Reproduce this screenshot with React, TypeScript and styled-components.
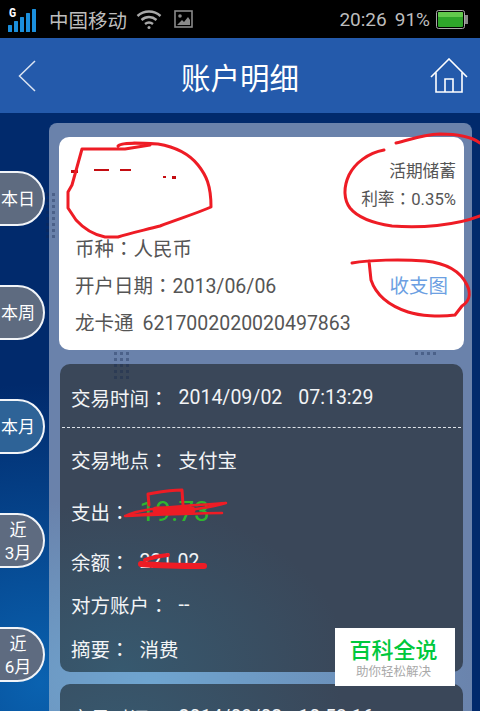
import React from 'react';
import styled, { createGlobalStyle } from 'styled-components';

const Global = createGlobalStyle`
  html, body {
    margin: 0;
    padding: 0;
    background: #000;
  }
  body {
    font-family: Roboto, "Noto Sans CJK SC", sans-serif;
  }
`;

const Screen = styled.div`
  position: relative;
  width: 480px;
  height: 711px;
  overflow: hidden;
`;

// Status bar
const StatusBar = styled.div`
  height: 38px;
  background: #000;
  color: #bdbdbd;
  display: flex;
  align-items: center;
  padding: 0 11px 0 8px;
  box-sizing: border-box;
`;
const Carrier = styled.span`
  font-size: 19.5px;
  margin: 0 9px 0 12px;
  white-space: nowrap;
`;
const StatusRight = styled.div`
  margin-left: auto;
  display: flex;
  align-items: center;
  font-size: 19px;
`;
const Clock = styled.span`
  margin-right: 8px;
`;
const Percent = styled.span`
  margin-right: 6px;
`;

// Header
const Header = styled.div`
  height: 75px;
  background: #245aab;
  display: grid;
  grid-template-columns: 1fr auto 1fr;
  align-items: center;
  padding: 0 12px 0 18px;
`;
const Title = styled.h1`
  margin: 0 6px 0 0;
  color: #fff;
  font-size: 29.5px;
  font-weight: 400;
`;
const HomeSlot = styled.div`
  justify-self: end;
  display: flex;
`;

// Body
const Body = styled.div`
  height: 598px;
  display: flex;
  background:
    radial-gradient(ellipse 300px 300px at 40px 570px, #0a62b0 0%, rgba(10, 98, 176, 0) 100%),
    #012a6c;
`;
const SideNav = styled.div`
  width: 49px;
  flex-shrink: 0;
  display: flex;
  flex-direction: column;
  gap: 59px;
  padding-top: 58px;
`;
const Tab = styled.div<{ $active?: boolean }>`
  width: 48px;
  height: 55px;
  margin-left: -3px;
  box-sizing: border-box;
  border: 2px solid #f1f4f8;
  border-radius: 0 28px 28px 0;
  background: ${(p) => (p.$active ? '#2e6397' : '#5e6b80')};
  color: #fff;
  font-size: 17px;
  line-height: 23px;
  display: flex;
  align-items: center;
  justify-content: center;
  text-align: center;
  padding-right: 6px;
  padding-top: 2px;
`;
const Panel = styled.div`
  width: 423px;
  margin-top: 10px;
  height: 600px;
  box-sizing: border-box;
  border-radius: 8px 8px 0 0;
  padding: 14px 8px 0 10px;
  background:
    radial-gradient(ellipse 340px 190px at 100px 560px, #6fa5d0 0%, rgba(111, 165, 208, 0) 100%),
    #6a82ab;
`;

// Full-width colon, centred in its cell as in the original font
const Colon = styled.span`
  font-family: "Noto Sans CJK TC", sans-serif;
`;

// White account card
const AccountCard = styled.div`
  height: 213px;
  box-sizing: border-box;
  background: #fff;
  border-radius: 10px;
  padding: 0 16px;
  color: #555;
  font-size: 19.5px;
`;
const AccountTop = styled.div`
  height: 92px;
  margin-right: -8px;
  padding-top: 21px;
  box-sizing: border-box;
  text-align: right;
  font-size: 16.7px;
  line-height: 27px;
`;
const AccountRow = styled.div`
  height: 37px;
  display: flex;
  align-items: center;
  justify-content: space-between;
  white-space: nowrap;
`;
const ChartLink = styled.span`
  color: #6c9fe2;
`;
const CardNumber = styled.span`
  margin-left: 9px;
`;

// Dark transaction card
const TxCard = styled.div`
  margin: 14px 1px 0;
  box-sizing: border-box;
  padding: 21px 0 12px;
  border-radius: 10px;
  color: #f2f4f6;
  font-size: 19.5px;
  background:
    radial-gradient(ellipse 230px 170px at 60px 100%, #37596f 0%, rgba(55, 89, 111, 0) 100%),
    #3a4759;
`;
const NextTxCard = styled(TxCard)`
  margin-top: 12px;
`;
const TxRow = styled.div<{ $gap?: number }>`
  display: flex;
  align-items: center;
  height: 24px;
  padding-left: 11px;
  margin-top: ${(p) => p.$gap ?? 0}px;
  white-space: pre;
`;
const TxLabel = styled.span`
  margin-right: 10px;
`;
const TxValue = styled.span<{ $color?: string; $size?: number }>`
  color: ${(p) => p.$color ?? 'inherit'};
  font-size: ${(p) => p.$size ?? 19.5}px;
`;
const TxTime = styled.span`
  margin-left: 16px;
`;
const DashedLine = styled.div`
  margin: 18px 2px 0;
  border-top: 1px dashed #dfe4ea;
`;

// Watermark and markup over the screenshot
const Watermark = styled.div`
  position: absolute;
  left: 335px;
  top: 628px;
  width: 120px;
  height: 58px;
  box-sizing: border-box;
  padding-right: 3px;
  background: #fff;
  text-align: center;
`;
const MarkTitle = styled.div`
  margin-top: 10px;
  color: #00c83c;
  font-size: 22px;
  line-height: 26px;
  font-weight: 500;
`;
const MarkSub = styled.div`
  color: #a9a9a9;
  font-size: 12.5px;
  line-height: 16px;
`;
const Markup = styled.svg`
  position: absolute;
  inset: 0;
  pointer-events: none;
`;

const SignalIcon = () => (
  <svg width="29" height="28" viewBox="0 0 29 28">
    <text x="1" y="12" fill="#fff" fontSize="12" fontWeight="700" fontFamily="Liberation Mono, monospace">G</text>
    {[0, 6, 12, 18, 24].map((x, i) => (
      <rect key={x} x={x} y={20 - i * 4} width="4" height={7 + i * 4} rx="0.5" fill="#1b8fdc" />
    ))}
  </svg>
);

const WifiIcon = () => (
  <svg width="26" height="21" viewBox="0 0 26 21" fill="none" stroke="#a8a8a8" strokeWidth="2.4">
    <path d="M1.5 7 C8 1 18 1 24.5 7" />
    <path d="M5.5 11 C10 7 16 7 20.5 11" />
    <path d="M9 15 C11.5 13 14.5 13 17 15" />
    <circle cx="13" cy="18.5" r="1.5" fill="#a8a8a8" stroke="none" />
  </svg>
);

const PictureIcon = () => (
  <svg width="19" height="18" viewBox="0 0 19 18" style={{ marginLeft: 12 }}>
    <rect x="1" y="1" width="17" height="16" fill="none" stroke="#8a8a8a" strokeWidth="1.6" />
    <circle cx="6" cy="6" r="1.8" fill="#8a8a8a" />
    <path d="M3 15 L8 10 L10 12 L14 7 L16 10 V15 Z" fill="#8a8a8a" />
  </svg>
);

const BatteryIcon = () => (
  <svg width="33" height="19" viewBox="0 0 33 19">
    <rect x="0.5" y="0.5" width="28" height="18" rx="2" fill="none" stroke="#a8a8a8" />
    <rect x="2" y="2" width="25" height="15" rx="1" fill="#2ea52a" />
    <rect x="2" y="2" width="25" height="5" rx="1" fill="#63c94d" />
    <rect x="29" y="5" width="3" height="9" fill="#8a8a8a" />
  </svg>
);

const BackIcon = () => (
  <svg width="18" height="32" viewBox="0 0 18 32" fill="none" stroke="#dbe4f2" strokeWidth="1.5">
    <path d="M17 1 L1.5 16 L17 31" />
  </svg>
);

const HomeIcon = () => (
  <svg width="38" height="35" viewBox="0 0 38 35" fill="none" stroke="#fff" strokeWidth="1.6">
    <path d="M1 19 L19 1 L37 19" />
    <path d="M6 14.5 V34 H32 V14.5" />
    <path d="M15 34 V21 H23 V34" />
  </svg>
);

// dark speckles printed in the page background
const Speckles = ({ x, y, cols, rows }: { x: number; y: number; cols: number; rows: number }) => (
  <g fill="#14264d" opacity="0.35">
    {Array.from({ length: cols * rows }, (_, i) => (
      <rect key={i} x={x + (i % cols) * 6} y={y + Math.floor(i / cols) * 6} width="3" height="3" />
    ))}
  </g>
);

const App = () => (
  <Screen>
    <Global />
    <StatusBar>
      <SignalIcon />
      <Carrier>中国移动</Carrier>
      <WifiIcon />
      <PictureIcon />
      <StatusRight>
        <Clock>20:26</Clock>
        <Percent>91%</Percent>
        <BatteryIcon />
      </StatusRight>
    </StatusBar>
    <Header>
      <BackIcon />
      <Title>账户明细</Title>
      <HomeSlot>
        <HomeIcon />
      </HomeSlot>
    </Header>
    <Body>
      <SideNav>
        <Tab>本日</Tab>
        <Tab>本周</Tab>
        <Tab $active>本月</Tab>
        <Tab>近<br />3月</Tab>
        <Tab>近<br />6月</Tab>
      </SideNav>
      <Panel>
        <AccountCard>
          <AccountTop>
            活期储蓄
            <br />
            利率<Colon>：</Colon>0.35%
          </AccountTop>
          <AccountRow><span>币种<Colon>：</Colon>人民币</span></AccountRow>
          <AccountRow>
            <span>开户日期<Colon>：</Colon>2013/06/06</span>
            <ChartLink>收支图</ChartLink>
          </AccountRow>
          <AccountRow>
            <span>龙卡通<CardNumber>6217002020020497863</CardNumber></span>
          </AccountRow>
        </AccountCard>
        <TxCard>
          <TxRow>
            <TxLabel>交易时间<Colon>：</Colon></TxLabel>
            <TxValue>2014/09/02<TxTime>07:13:29</TxTime></TxValue>
          </TxRow>
          <DashedLine />
          <TxRow $gap={19}>
            <TxLabel>交易地点<Colon>：</Colon></TxLabel>
            <TxValue>支付宝</TxValue>
          </TxRow>
          <TxRow $gap={28}>
            <TxLabel>支出<Colon>：</Colon></TxLabel>
            <TxValue $color="#2fb52f" $size={28}>19.73</TxValue>
          </TxRow>
          <TxRow $gap={26}>
            <TxLabel>余额<Colon>：</Colon></TxLabel>
            <TxValue>221.02</TxValue>
          </TxRow>
          <TxRow $gap={19}>
            <TxLabel>对方账户<Colon>：</Colon></TxLabel>
            <TxValue>--</TxValue>
          </TxRow>
          <TxRow $gap={20}>
            <TxLabel>摘要<Colon>：</Colon></TxLabel>
            <TxValue>消费</TxValue>
          </TxRow>
        </TxCard>
        <NextTxCard>
          <TxRow>
            <TxLabel>交易时间<Colon>：</Colon></TxLabel>
            <TxValue>2014/09/02<TxTime>10:53:16</TxTime></TxValue>
          </TxRow>
        </NextTxCard>
      </Panel>
    </Body>
    <Markup width="480" height="711" viewBox="0 0 480 711">
      <Speckles x={46} y={193} cols={2} rows={8} />
      <Speckles x={114} y={352} cols={3} rows={5} />
      <Speckles x={415} y={352} cols={4} rows={1} />
      <g fill="#c40d12">
        <rect x="71" y="170" width="7" height="3" />
        <rect x="94" y="169" width="15" height="2" />
        <rect x="120" y="169" width="11" height="2" />
        <rect x="163" y="176" width="3" height="2" />
        <rect x="172" y="176" width="4" height="3" />
      </g>
      <g fill="none" stroke="#ee1c25" strokeWidth="3" strokeLinecap="round" strokeLinejoin="round">
        <path d="M118 146 C121 142 140 143 158 144 C176 147 190 155 198 165 C206 175 211 185 211 207 C195 214 178 219 160 226 C145 230 130 233 118 237 L105 237 C95 235 85 230 76 220 L68 208 L68 192 L72 185 L82 149 L125 149 L150 145" />
        <path d="M396 143 C410 140 420 135 440 134 C460 134 472 137 480 143" />
        <path d="M384 150 C368 153 355 163 349 175 C343 188 344 200 350 208 C358 218 372 223 392 226 C420 228 455 226 480 216" />
        <path d="M352 263 C370 260 400 259 425 261 C445 263 460 270 467 285 C472 295 468 302 462 306 L455 315 C440 317 420 316 408 312 C390 306 376 295 371 280 L369 261" />
        <path d="M149 505 L148 494 C160 492 170 490 182 490 L183 505" />
      </g>
      <g fill="none" stroke="#ee1c25" strokeLinecap="round" strokeLinejoin="round">
        <path strokeWidth="2.5" d="M125 516 C140 508 180 506 226 503 C205 510 165 512 125 516 C160 515 195 513 222 513" />
        <path strokeWidth="7" d="M156 510 L192 510" />
        <path strokeWidth="4" d="M145 560 C152 557 160 556 168 555" />
        <path strokeWidth="6" d="M141 564 C165 566 185 566 204 566" />
      </g>
    </Markup>
    <Watermark>
      <MarkTitle>百科全说</MarkTitle>
      <MarkSub>助你轻松解决</MarkSub>
    </Watermark>
  </Screen>
);

export default App;
